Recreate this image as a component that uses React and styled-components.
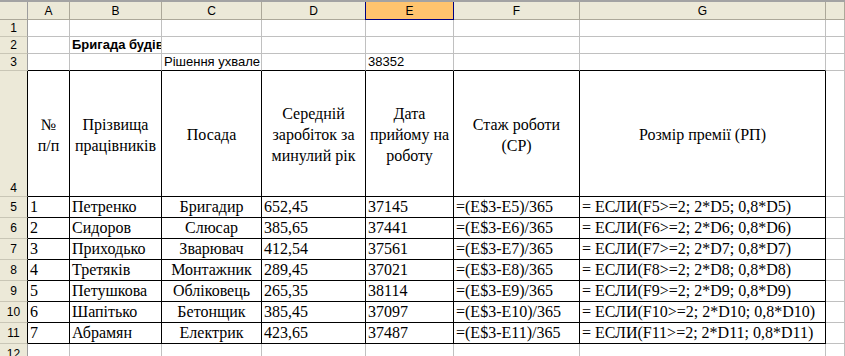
import styled, { createGlobalStyle } from "styled-components";

const SERIF = `"Liberation Serif", "Times New Roman", serif`;
const SANS = `"Liberation Sans", Arial, sans-serif`;
const GRID = "#c0c0c0";
const HEAD_LINE = "#aca899";

const COLS = ["A", "B", "C", "D", "E", "F", "G", ""];

const workers = [
  ["1", "Петренко", "Бригадир", "652,45", "37145"],
  ["2", "Сидоров", "Слюсар", "385,65", "37441"],
  ["3", "Приходько", "Зварювач", "412,54", "37561"],
  ["4", "Третяків", "Монтажник", "289,45", "37021"],
  ["5", "Петушкова", "Обліковець", "265,35", "38114"],
  ["6", "Шапітько", "Бетонщик", "385,45", "37097"],
  ["7", "Абрамян", "Електрик", "423,65", "37487"],
];

const headings = [
  ["№", "п/п"],
  ["Прізвища", "працівників"],
  ["Посада"],
  ["Середній", "заробіток за", "минулий рік"],
  ["Дата", "прийому на", "роботу"],
  ["Стаж роботи", "(СР)"],
  ["Розмір премії (РП)"],
];

const GlobalStyle = createGlobalStyle`
  * { box-sizing: border-box; }
  html, body {
    margin: 0;
    padding: 0;
    background: #fff;
    overflow: hidden;
  }
`;

const Sheet = styled.div`
  display: grid;
  grid-template-columns: 28px 42px 92px 100px 104px 88px 126px 246px 1fr;
  grid-template-rows: 18px 17px 17px 17px 126px repeat(8, 21px);
  width: 845px;
  height: 356px;
  overflow: hidden;
  border-top: 2px solid #a3a3a3;
  background: #fff;
  color: #000;
`;

const Corner = styled.div`
  background: #ece9d8;
  border-right: 1px solid #9d9d9d;
  border-bottom: 1px solid ${HEAD_LINE};
`;

const ColHead = styled.div`
  display: flex;
  align-items: center;
  justify-content: center;
  background: ${(p) => (p.$active ? "#ffc46e" : "#ece9d8")};
  border-right: 1px solid ${(p) => (p.$active ? "#000080" : HEAD_LINE)};
  border-bottom: 1px solid ${(p) => (p.$active ? "#000080" : HEAD_LINE)};
  box-shadow: ${(p) => (p.$active ? "-1px 0 0 #000080" : "none")};
  font: 12px ${SANS};
`;

const RowHead = styled.div`
  display: flex;
  justify-content: center;
  align-items: ${(p) => (p.$bottom ? "flex-end" : "center")};
  background: #ece9d8;
  border-right: 1px solid ${(p) => (p.$framed ? "#000" : "#9d9d9d")};
  border-bottom: 1px solid #c9c6b6;
  font: 12px ${SANS};
  line-height: 16px;
`;

const Cell = styled.div`
  display: flex;
  align-items: flex-end;
  justify-content: ${(p) => (p.$center ? "center" : "flex-start")};
  padding: 0 2px;
  overflow: hidden;
  white-space: nowrap;
  border-right: 1px solid ${(p) => (p.$framed ? "#000" : GRID)};
  border-bottom: 1px solid ${(p) => (p.$framed || p.$topOfTable ? "#000" : GRID)};
  font-family: ${(p) => (p.$sans ? SANS : SERIF)};
  font-size: ${(p) => (p.$sans ? "13px" : "16px")};
  font-weight: ${(p) => (p.$bold ? "bold" : "normal")};
  line-height: ${(p) => (p.$sans ? "16px" : "20px")};
`;

const HeadCell = styled(Cell)`
  flex-direction: column;
  align-items: center;
  justify-content: center;
  padding: 2px 2px 0;
  text-align: center;
  line-height: 21px;
`;

const emptyRow = (n, opts = {}) => (
  <>
    <RowHead>{n}</RowHead>
    {COLS.map((c, i) => (
      <Cell key={c + i} $topOfTable={opts.topOfTable && i < 7} />
    ))}
  </>
);

export default function App() {
  return (
    <>
      <GlobalStyle />
      <Sheet>
        <Corner />
        {COLS.map((c, i) => (
          <ColHead key={"h" + i} $active={c === "E"}>
            {c}
          </ColHead>
        ))}

        {emptyRow(1)}

        <RowHead>2</RowHead>
        <Cell />
        <Cell $sans $bold>Бригада будів</Cell>
        {COLS.slice(2).map((c, i) => (
          <Cell key={"r2" + i} />
        ))}

        <RowHead>3</RowHead>
        <Cell $topOfTable />
        <Cell $topOfTable />
        <Cell $topOfTable $sans>Рішення ухвале</Cell>
        <Cell $topOfTable />
        <Cell $topOfTable $sans>38352</Cell>
        <Cell $topOfTable />
        <Cell $topOfTable />
        <Cell />

        <RowHead $framed $bottom>4</RowHead>
        {headings.map((lines, i) => (
          <HeadCell key={"hd" + i} $framed>
            {lines.map((l) => (
              <span key={l}>{l}</span>
            ))}
          </HeadCell>
        ))}
        <Cell />

        {workers.map(([no, name, post, pay, hired], i) => {
          const r = i + 5;
          return (
            <Row key={r} r={r} no={no} name={name} post={post} pay={pay} hired={hired} />
          );
        })}

        {emptyRow(12)}
      </Sheet>
    </>
  );
}

function Row({ r, no, name, post, pay, hired }) {
  return (
    <>
      <RowHead $framed>{r}</RowHead>
      <Cell $framed>{no}</Cell>
      <Cell $framed>{name}</Cell>
      <Cell $framed $center>{post}</Cell>
      <Cell $framed>{pay}</Cell>
      <Cell $framed>{hired}</Cell>
      <Cell $framed>{`=(E$3-E${r})/365`}</Cell>
      <Cell $framed>{`= ЕСЛИ(F${r}>=2; 2*D${r}; 0,8*D${r})`}</Cell>
      <Cell />
    </>
  );
}
